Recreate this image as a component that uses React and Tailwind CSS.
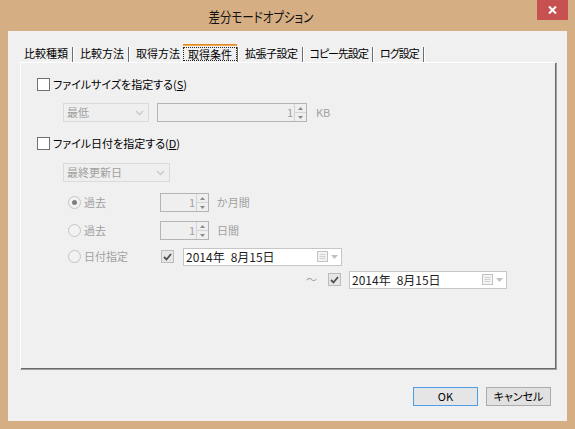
const jp = "font-['Noto_Sans_CJK_JP',sans-serif] [font-feature-settings:'palt']"

function Check({ checked, disabled }) {
  return (
    <span
      className={
        disabled
          ? 'flex items-center justify-center w-[13px] h-[13px] border border-[#bcbcbc] bg-[#e6e6e6] shrink-0'
          : 'flex items-center justify-center w-[13px] h-[13px] border border-[#707070] bg-white shrink-0'
      }
    >
      {checked && (
        <svg width="9" height="8" viewBox="0 0 9 8">
          <path d="M1 4 L3.5 6.5 L8 1" fill="none" stroke="#4e4e4e" strokeWidth="1.8" />
        </svg>
      )}
    </span>
  )
}

function Radio({ on }) {
  return (
    <span className="flex items-center justify-center w-[13px] h-[13px] rounded-full border border-[#c4c4c4] bg-[#f2f2f2] shrink-0">
      {on && <span className="w-[5px] h-[5px] rounded-full bg-[#808080]" />}
    </span>
  )
}

function Chevron() {
  return (
    <svg width="9" height="6" viewBox="0 0 9 6">
      <path d="M1 1 L4.5 4.5 L8 1" fill="none" stroke="#c8c8c8" strokeWidth="1.3" />
    </svg>
  )
}

function SpinButtons() {
  return (
    <div className="flex flex-col w-[12px] h-full border-l border-[#d4d4d4] shrink-0">
      <div className="flex-1 flex items-center justify-center border-b border-[#d4d4d4]">
        <svg width="5" height="3" viewBox="0 0 5 3">
          <path d="M0 3 L2.5 0 L5 3 Z" fill="#8a8a8a" />
        </svg>
      </div>
      <div className="flex-1 flex items-center justify-center">
        <svg width="5" height="3" viewBox="0 0 5 3">
          <path d="M0 0 L2.5 3 L5 0 Z" fill="#8a8a8a" />
        </svg>
      </div>
    </div>
  )
}

function DatePicker({ wide }) {
  return (
    <div
      className={
        (wide ? 'w-[158px] ' : 'w-[159px] ') +
        'flex items-center h-[18px] border border-[#c6c6c6] bg-white pl-[2px] pr-[3px]'
      }
    >
      <span className="flex-1 text-[12px] leading-none text-[#1e1e1e]">
        2014年<span className="ml-[6px]">8月15日</span>
      </span>
      <svg width="11" height="11" viewBox="0 0 11 11">
        <rect x="0.5" y="0.5" width="10" height="10" fill="#f4f4f4" stroke="#c2c2c2" />
        <path d="M2.5 3.5 H8.5 M2.5 5.5 H8.5 M2.5 7.5 H8.5" stroke="#d0d0d0" />
      </svg>
      <svg width="7" height="4" viewBox="0 0 7 4" className="ml-[3px]">
        <path d="M0 0 L3.5 4 L7 0 Z" fill="#c0c0c0" />
      </svg>
    </div>
  )
}

const tabs = [
  { label: '比較種類', tight: '' },
  { label: '比較方法', tight: '' },
  { label: '取得方法', tight: '' },
  { label: '取得条件', tight: '' },
  { label: '拡張子設定', tight: 'tracking-[-0.5px]' },
  { label: 'コピー先設定', tight: 'tracking-[-1px]' },
  { label: 'ログ設定', tight: 'tracking-[-1px]' },
]

export default function App() {
  return (
    <div className={`w-[575px] h-[429px] bg-[#d6ae83] flex flex-col ${jp}`}>
      {/* title bar */}
      <div className="h-[31px] flex shrink-0">
        <div className="flex-1 flex items-center justify-center pr-[15px] pt-[1px] text-[14px] text-[#111]">
          <span className="scale-x-[0.82]">差分モードオプション</span>
        </div>
        <div className="w-[31px] h-[20px] mr-[7px] bg-[#c75050] flex items-center justify-center">
          <svg width="9" height="8" viewBox="0 0 9 8">
            <path d="M1 0.5 L8 7.5 M8 0.5 L1 7.5" stroke="#fff" strokeWidth="2" />
          </svg>
        </div>
      </div>

      {/* client */}
      <div className="mx-[8px] mb-[8px] flex-1 bg-[#f0f0f0] flex flex-col text-[11px] text-black">
        <div className="pt-[13px] pl-[12px] pr-[10px]">
          {/* tab strip */}
          <div className="flex items-end h-[18px]">
            {tabs.map((t, i) => {
              const sel = i === 3
              return (
                <div key={t.label} className="flex items-end h-full">
                  {sel ? (
                    <div className="h-full flex flex-col">
                      <div className="h-[2px] bg-[#f0a848] border-t border-[#e08a2a]" />
                      <div className="flex-1 mt-[1px] mb-[1px] border border-dotted border-[#222] flex items-center px-[4px] leading-none">
                        {t.label}
                      </div>
                    </div>
                  ) : (
                    <div className={`h-full flex items-center pl-[4px] pr-[3px] leading-none ${t.tight}`}>{t.label}</div>
                  )}
                  {i !== 2 && (
                    <div
                      className={
                        sel
                          ? 'w-[2px] h-[15px] border-l border-[#6d6d6d] border-r border-r-white mr-[2px]'
                          : 'w-[2px] h-[15px] border-l border-[#6d6d6d] border-r border-r-white ml-[1px] mr-[2px]'
                      }
                    />
                  )}
                </div>
              )
            })}
          </div>

          {/* panel */}
          <div className="h-[308px] border border-t-white border-l-white border-r-[#a0a0a0] border-b-[#a0a0a0] shadow-[inset_-1px_-1px_0_#6a6a6a] flex flex-col">
            <div className="mt-[15px] ml-[16px] flex items-center h-[13px]">
              <Check />
              <span className="ml-[3px] leading-none">
                ファイルサイズを指定する(<u>S</u>)
              </span>
            </div>

            <div className="mt-[12px] ml-[42px] flex items-center h-[19px] text-[#a0a0a0]">
              <div className="w-[86px] h-full flex items-center border border-[#dadada] bg-[#efefef] pl-[3px] pr-[4px]">
                <span className="flex-1 leading-none">最低</span>
                <Chevron />
              </div>
              <div className="w-[150px] h-full ml-[8px] flex items-center border border-[#b4b4b4] bg-[#efefef]">
                <span className="flex-1 text-right pr-[1px] leading-none">1</span>
                <SpinButtons />
              </div>
              <span className="ml-[9px] leading-none">KB</span>
            </div>

            <div className="mt-[15px] ml-[16px] flex items-center h-[13px]">
              <Check />
              <span className="ml-[3px] leading-none">
                ファイル日付を指定する(<u>D</u>)
              </span>
            </div>

            <div className="mt-[13px] ml-[42px] flex items-center h-[19px] text-[#a0a0a0]">
              <div className="w-[107px] h-full flex items-center border border-[#dadada] bg-[#efefef] pl-[3px] pr-[4px]">
                <span className="flex-1 leading-none">最終更新日</span>
                <Chevron />
              </div>
            </div>

            <div className="mt-[11px] ml-[47px] flex items-center h-[19px] text-[#a0a0a0]">
              <Radio on />
              <span className="ml-[3px] w-[76px] leading-none">過去</span>
              <div className="w-[49px] h-full flex items-center border border-[#b4b4b4] bg-[#efefef]">
                <span className="flex-1 text-right pr-[1px] leading-none">1</span>
                <SpinButtons />
              </div>
              <span className="ml-[8px] leading-none">か月間</span>
            </div>

            <div className="mt-[9px] ml-[47px] flex items-center h-[19px] text-[#a0a0a0]">
              <Radio />
              <span className="ml-[3px] w-[76px] leading-none">過去</span>
              <div className="w-[49px] h-full flex items-center border border-[#b4b4b4] bg-[#efefef]">
                <span className="flex-1 text-right pr-[1px] leading-none">1</span>
                <SpinButtons />
              </div>
              <span className="ml-[8px] leading-none">日間</span>
            </div>

            <div className="mt-[7px] ml-[47px] flex items-center h-[19px] text-[#a0a0a0]">
              <Radio />
              <span className="ml-[3px] w-[77px] leading-none">日付指定</span>
              <Check checked disabled />
              <div className="ml-[9px]">
                <DatePicker />
              </div>
            </div>

            <div className="mt-[4px] ml-[285px] flex items-center h-[19px] text-[#a0a0a0]">
              <span className="w-[22px] leading-none">〜</span>
              <Check checked disabled />
              <div className="ml-[8px]">
                <DatePicker wide />
              </div>
            </div>
          </div>
        </div>

        {/* buttons */}
        <div className="mt-[17px] flex justify-end gap-[8px] pr-[16px]">
          <button className="w-[65px] h-[19px] flex items-center justify-center border border-[#4d9de8] bg-[#e5e5e5] leading-none text-[11px]">
            OK
          </button>
          <button className="w-[65px] h-[19px] flex items-center justify-center border border-[#acacac] bg-[#e1e1e1] leading-none text-[11px]">
            キャンセル
          </button>
        </div>
      </div>
    </div>
  )
}
